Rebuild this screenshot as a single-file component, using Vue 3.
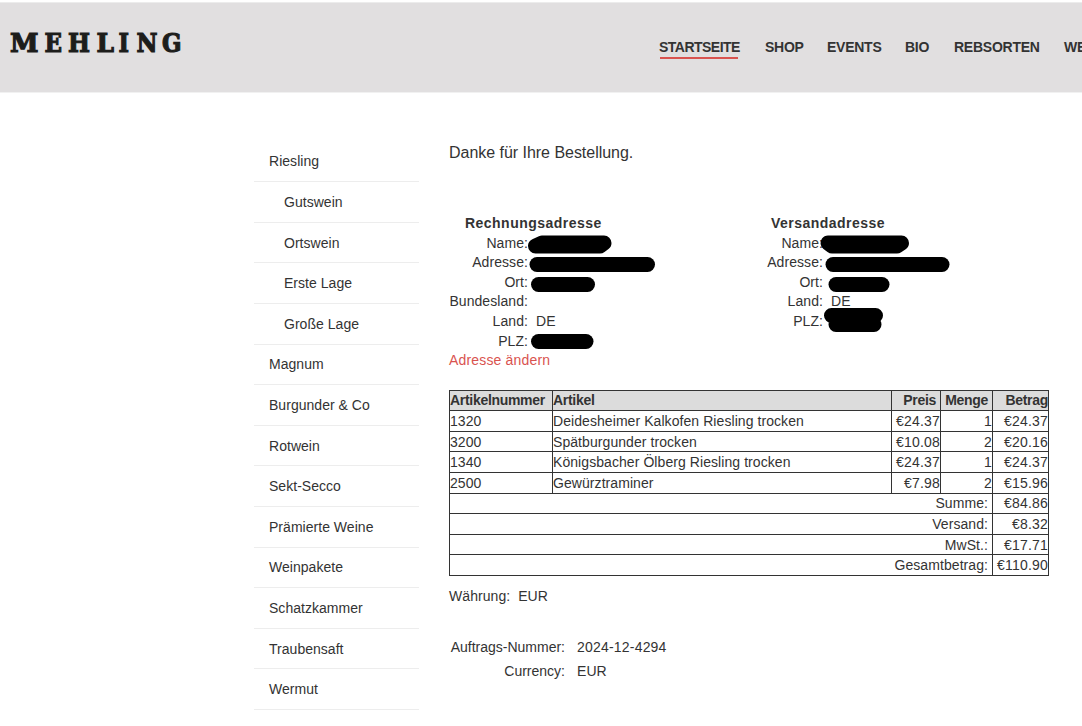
<template>
  <div class="page">
    <header class="header">
      <svg class="logo" viewBox="0 0 190 40" role="img" aria-label="Mehling">
        <text
          v-for="letter in logoLetters"
          :key="letter.char"
          :x="letter.x"
          y="31"
          :textLength="letter.width"
          lengthAdjust="spacingAndGlyphs"
          v-text="letter.char"
        />
      </svg>
      <nav class="main-nav">
        <a
          v-for="(item, i) in navItems"
          :key="item"
          href="#"
          class="nav-link"
          :class="{ active: i === 0 }"
          >{{ item }}</a
        >
      </nav>
    </header>

    <div class="content">
      <aside class="sidebar">
        <a
          v-for="cat in categories"
          :key="cat.name"
          href="#"
          class="category"
          :class="{ sub: cat.sub }"
          >{{ cat.name }}</a
        >
      </aside>

      <main class="order">
        <p class="thanks">Danke für Ihre Bestellung.</p>

        <section class="addresses">
          <div class="address billing">
            <h4 class="address-title">Rechnungsadresse</h4>
            <div v-for="row in billing" :key="row.label" class="address-row">
              <span class="label">{{ row.label }}:</span>
              <span>{{ row.value }}</span>
            </div>
            <a href="#" class="change-link">Adresse ändern</a>
          </div>
          <div class="address shipping">
            <h4 class="address-title">Versandadresse</h4>
            <div v-for="row in shipping" :key="row.label" class="address-row">
              <span class="label">{{ row.label }}:</span>
              <span>{{ row.value }}</span>
            </div>
          </div>

          <!-- geschwärzte Kundendaten -->
          <svg class="redactions" viewBox="0 0 600 160">
            <path d="M86.5 33L93 30H155L151 33Z" />
            <path d="M88 51.5H198.5" />
            <path d="M89.5 71.5H138.5" />
            <path d="M89.5 128.5H137" />
            <path d="M379 30H452.5L448 33H383Z" />
            <path d="M384 51.5H493" />
            <path d="M387 71.5H433" />
            <path d="M382.5 102.5H426.5M387 111.5H425" />
          </svg>
        </section>

        <div class="items">
          <div class="items-row head">
            <span>Artikelnummer</span>
            <span>Artikel</span>
            <span class="num gap">Preis</span>
            <span class="num gap">Menge</span>
            <span class="num">Betrag</span>
          </div>
          <div v-for="item in items" :key="item.id" class="items-row">
            <span>{{ item.id }}</span>
            <span>{{ item.name }}</span>
            <span class="num">{{ item.price }}</span>
            <span class="num">{{ item.qty }}</span>
            <span class="num">{{ item.total }}</span>
          </div>
          <div v-for="sum in sums" :key="sum.label" class="items-row">
            <span class="num gap wide">{{ sum.label }}:</span>
            <span class="num">{{ sum.value }}</span>
          </div>
        </div>

        <p class="currency">Währung:&nbsp; EUR</p>

        <div class="summary">
          <span class="label">Auftrags-Nummer:</span>
          <span class="order-number">2024-12-4294</span>
          <span class="label">Currency:</span>
          <span>EUR</span>
        </div>
      </main>
    </div>
  </div>
</template>

<script setup>
const logoLetters = [
  { char: "M", x: 10, width: 28.5 },
  { char: "E", x: 44.5, width: 17.5 },
  { char: "H", x: 68, width: 22 },
  { char: "L", x: 96.5, width: 17.5 },
  { char: "I", x: 118.5, width: 10.5 },
  { char: "N", x: 136.5, width: 21 },
  { char: "G", x: 162, width: 19.5 },
];

const navItems = ["STARTSEITE", "SHOP", "EVENTS", "BIO", "REBSORTEN", "WEINGUT"];

const categories = [
  { name: "Riesling" },
  { name: "Gutswein", sub: true },
  { name: "Ortswein", sub: true },
  { name: "Erste Lage", sub: true },
  { name: "Große Lage", sub: true },
  { name: "Magnum" },
  { name: "Burgunder & Co" },
  { name: "Rotwein" },
  { name: "Sekt-Secco" },
  { name: "Prämierte Weine" },
  { name: "Weinpakete" },
  { name: "Schatzkammer" },
  { name: "Traubensaft" },
  { name: "Wermut" },
];

const billing = [
  { label: "Name" },
  { label: "Adresse" },
  { label: "Ort" },
  { label: "Bundesland" },
  { label: "Land", value: "DE" },
  { label: "PLZ" },
];

const shipping = [
  { label: "Name" },
  { label: "Adresse" },
  { label: "Ort" },
  { label: "Land", value: "DE" },
  { label: "PLZ" },
];

const items = [
  { id: "1320", name: "Deidesheimer Kalkofen Riesling trocken", price: "€24.37", qty: 1, total: "€24.37" },
  { id: "3200", name: "Spätburgunder trocken", price: "€10.08", qty: 2, total: "€20.16" },
  { id: "1340", name: "Königsbacher Ölberg Riesling trocken", price: "€24.37", qty: 1, total: "€24.37" },
  { id: "2500", name: "Gewürztraminer", price: "€7.98", qty: 2, total: "€15.96" },
];

const sums = [
  { label: "Summe", value: "€84.86" },
  { label: "Versand", value: "€8.32" },
  { label: "MwSt.", value: "€17.71" },
  { label: "Gesamtbetrag", value: "€110.90" },
];
</script>

<style>
body {
  background: #ffffff;
  overflow: hidden;
}
</style>

<style scoped>
.page {
  height: 726px;
  overflow: hidden;
  padding-top: 2px;
  box-sizing: border-box;
  font-family: "Liberation Sans", Arial, sans-serif;
  font-size: 14px;
  line-height: 19.6px;
  letter-spacing: 0.07px;
  color: #333333;
}
a {
  color: inherit;
  text-decoration: none;
}
.header {
  display: flex;
  align-items: flex-start;
  height: 91px;
  box-sizing: border-box;
  background: #e1dfe0;
  border-top: 1px solid #ececec;
  border-bottom: 1px solid #f1f1f1;
}
.logo {
  flex: none;
  width: 190px;
  height: 40px;
  margin-top: 18px;
  margin-right: 469px;
}
.logo text {
  font-family: "DejaVu Serif", serif;
  font-weight: 700;
  font-size: 26px;
  letter-spacing: 0;
  fill: #1d1d1b;
  stroke: #1d1d1b;
  stroke-width: 1.2px;
}
.main-nav {
  display: grid;
  grid-template-columns: 106px 62px 78px 49px 110px auto;
  margin-top: 35px;
  white-space: nowrap;
}
.nav-link {
  justify-self: start;
  font-weight: 700;
  letter-spacing: -0.25px;
  height: 21px;
  box-sizing: border-box;
}
.nav-link.active {
  width: 78px;
  margin-left: 1px;
  text-indent: -1px;
  letter-spacing: -0.52px;
  border-bottom: 2px solid #d9534f;
}
.content {
  display: flex;
  padding-left: 254px;
}
.sidebar {
  width: 165px;
  margin-top: 48.5px;
  margin-right: 30px;
  letter-spacing: 0.03px;
}
.category {
  display: block;
  height: 40.615px;
  box-sizing: border-box;
  padding: 10.8px 15px 9px;
  border-bottom: 1px solid #ededed;
}
.category.sub {
  padding-left: 30px;
}
.order {
  width: 600px;
}
.thanks {
  margin: 49px 0 0;
  font-size: 16px;
  line-height: 22px;
  letter-spacing: -0.03px;
}
.addresses {
  position: relative;
  display: flex;
  margin-top: 49px;
  height: 176.7px;
}
.address {
  flex: none;
  width: 317px;
}
.address-title {
  margin: 0 0 0.6px 16px;
  font-size: 14px;
  line-height: 20px;
  letter-spacing: 0.47px;
}
.shipping .address-title {
  margin-left: 5px;
}
.address-row {
  display: grid;
  grid-template-columns: 79px 1fr;
  column-gap: 8px;
  height: 19.6px;
}
.shipping .address-row {
  grid-template-columns: 57px 1fr;
}
.label {
  text-align: right;
}
.change-link {
  color: #d9534f;
  letter-spacing: 0.17px;
}
.redactions {
  position: absolute;
  top: 0;
  left: 0;
  width: 600px;
  height: 160px;
  fill: #000000;
  stroke: #000000;
  stroke-width: 15px;
  stroke-linecap: round;
  stroke-linejoin: round;
}
.items {
  border-right: 1px solid #333333;
  border-bottom: 1px solid #333333;
}
.items-row {
  display: grid;
  grid-template-columns: 103px 339px 49px 52px 56px;
  height: 20.57px;
}
.items-row span {
  height: 20.57px;
  box-sizing: border-box;
  padding-top: 0.9px;
  border-top: 1px solid #333333;
  border-left: 1px solid #333333;
  white-space: nowrap;
}
.items-row.head {
  font-weight: 700;
  background: #dcdcdc;
}
.items-row.head span {
  padding-top: 0;
  letter-spacing: -0.3px;
}
.items-row .num {
  text-align: right;
  letter-spacing: 0.2px;
}
.items-row .gap {
  padding-right: 4px;
  letter-spacing: 0.07px;
}
.items-row .wide {
  grid-column: span 4;
}
.currency {
  margin: 11px 0 0;
}
.summary {
  display: grid;
  grid-template-columns: 116px 1fr;
  column-gap: 12px;
  row-gap: 4.4px;
  margin-top: 32px;
}
.summary .label {
  letter-spacing: 0;
}
.order-number {
  letter-spacing: 0.2px;
}
</style>
